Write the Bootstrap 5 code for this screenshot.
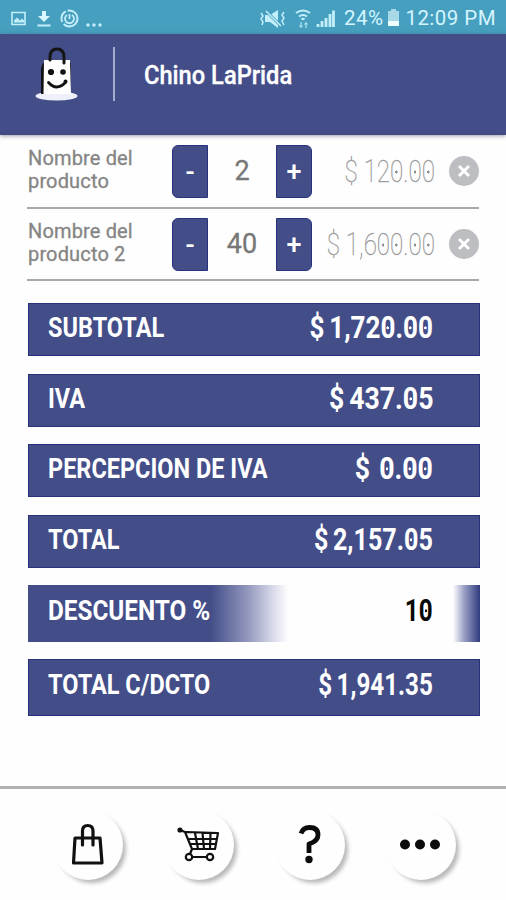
<!DOCTYPE html>
<html lang="es">
<head>
<meta charset="utf-8">
<meta name="viewport" content="width=device-width, initial-scale=1">
<title>Chino LaPrida</title>
<link href="https://cdn.jsdelivr.net/npm/bootstrap@5.3.0/dist/css/bootstrap.min.css" rel="stylesheet">
<style>
:root{--navy:#434e89;--edge:#28327a}
body{font-family:Roboto,"Liberation Sans",sans-serif;background:#fefefe;height:900px;overflow:hidden}
svg{display:block;flex:none}
.statusbar{height:34px;background:#469fbe;color:#d3f5ff;padding:2px 10px 0 11px;font-size:20.5px;white-space:nowrap}
.clock{letter-spacing:.45px}
.topbar{height:101px;background:var(--navy);border-bottom:2px solid #424b84;box-shadow:0 1px 4px rgba(60,60,90,.5);padding:11px 0 0 33px}
.rule-v{width:2px;height:54px;background:#a5abcf;margin:2px 29px 0 33px}
.shop-title{font-size:26px;font-weight:500;color:#fff;line-height:30px;margin-top:15px;transform:scaleX(.91);transform-origin:left;white-space:nowrap;-webkit-text-stroke:.3px #fff}
.content-area{padding:8px 27px 0 28px}
.item-row{height:66px;padding-top:2px;border-bottom:2px solid #a9a9a9;margin-left:-1px;padding-left:1px}
.item-row + .item-row{height:72px;padding-top:9px}
.item-name{width:144px;flex:none;font-size:20px;line-height:23px;color:#858585;letter-spacing:.15px;margin-top:2px;-webkit-text-stroke:.3px #858585}
.step{width:36px;flex:none;height:53px;border:1px solid var(--edge);background:var(--navy);color:#fff;font-size:27px;font-weight:500;line-height:48px;padding:0;text-align:center}
.step-minus{border-radius:6px 0 0 6px}
.step-plus{border-radius:0 6px 6px 0}
.qty{width:68px;flex:none;font-size:27px;line-height:53px;color:#777;text-align:center;-webkit-text-stroke:.3px #777}
.price{flex:1 1 0;width:0;display:flex;justify-content:flex-end;font-weight:100;font-size:31px;color:#8c8c8c;white-space:pre;transform:scaleX(.78);transform-origin:right;line-height:53px;-webkit-text-stroke:.35px #a0a0a0}
.remove{width:30px;height:30px;margin:11px 0 0 14px}
.bars{padding-top:22px}
.total-bar{height:53px;background:var(--navy);border:1px solid var(--edge);padding:0 46px 3px 19px;margin-bottom:17.600px;color:#fff;width:452px}
.total-bar.tall{height:57px;padding-bottom:5px;margin-bottom:16.500px}
.bar-label{font-size:27px;font-weight:700;transform:scaleX(.87);transform-origin:left;white-space:nowrap;line-height:40px}
.label-wide{transform:scaleX(.9)}
.bar-value{font-size:31px;font-weight:700;transform:scaleX(.84);transform-origin:right;white-space:nowrap;line-height:40px;word-spacing:-2px}
.value-wide{transform:scaleX(.86)}
.value-gap{word-spacing:3px;transform:scaleX(.86)}
.value-tight{transform:scaleX(.81)}
.value-ones{transform:scaleX(.78)}
.discount{border:0;padding-left:20px;padding-right:47px;background:linear-gradient(90deg,var(--navy) 0,var(--navy) 183px,#9398bd 220px,#d8daea 245px,#fefefe 260px,#fefefe 425px,#9ba1c5 436px,#2f3b7e 452px)}
.discount .bar-value{color:#080808}
.z{background:radial-gradient(circle at 50% 51%,currentColor 0,currentColor 1.2px,transparent 1.8px)}
.bottom-nav{height:114px;border-top:3px solid #b2b2b2;padding:21px 0 0 53px;gap:41px;background:#fefefe}
.nav-disc{width:70px;height:70px;border-radius:50%;background:#fefefe;box-shadow:4px 4px 4px -1px rgba(0,0,0,.28)}
</style>
<script src="https://cdn.jsdelivr.net/npm/bootstrap@5.3.0/dist/js/bootstrap.bundle.min.js"></script>
</head>
<body class="d-flex flex-column m-0">
<header>
  <div class="statusbar d-flex align-items-center justify-content-between">
    <svg width="92" height="30" viewBox="0 0 92 30" fill="none" stroke="#c3effb">
      <path d="M1 9.500h13v12H1z" stroke-width="1.600"/><path d="M3 19.500v-2l3-3 3 3 2-2 2 2v2z" fill="#c3effb" stroke="none"/>
      <path d="M31 8h4v5h4l-6 6-6-6h4z" fill="#d8f7ff" stroke="none"/><path d="M26.500 22.500h13" stroke-width="2"/>
      <circle cx="58.500" cy="15.500" r="8" stroke-width="2" stroke-dasharray="19 2.500 12 2"/><path d="M56 12a4.500 4.500 0 1 0 5 0M58.500 11v5" stroke-width="1.800"/>
      <g fill="#c3effb" stroke="none"><circle cx="77" cy="22" r="1.700"/><circle cx="83" cy="22" r="1.700"/><circle cx="89" cy="22" r="1.700"/></g>
    </svg>
    <div class="d-flex align-items-center">
      <svg width="77" height="30" viewBox="0 0 77 30" fill="none" stroke="#c3effb">
        <path d="M6 12h5l8-5v18l-8-6H6z" fill="#c3effb" stroke="none"/><path d="M7 8l14 14" stroke="#469fbe" stroke-width="3"/><path d="M7 8l15 15M2 10l2 3-2 3 2 3-1 3M25 9l-2 3 2 3-2 3 2 4" stroke-width="1.500"/>
        <path d="M37 10q7-5 14 0M40 13.500q4-3 8 0M42.500 16.500q1.500-1.500 3 0" stroke-width="2"/><path d="M42 19v5M40.500 22.500l1.500 2 1.500-2M47 25v-5M45.500 21.500l1.500-2 1.500 2" stroke-width="1"/>
        <path d="M59 24v-3M63 24v-6M67 24v-9M71 24V11M74.500 24V7.500" stroke-width="2.800"/>
      </svg>
      <span class="clock ms-1 ps-1">24%</span>
      <svg class="ms-1" width="14" height="30" viewBox="0 0 14 30"><path d="M4 6h5v2h3v15H1V8h3z" fill="#a9d8e6"/><path d="M1 18h11v5H1z" fill="#f0ffff"/></svg>
      <span class="clock ms-1">12:09 PM</span>
    </div>
  </div>
  <div class="topbar d-flex align-items-start">
    <svg width="47" height="60" viewBox="0 0 47 60" fill="none" stroke-linecap="round">
      <ellipse cx="23.500" cy="51" rx="21" ry="4.500" fill="#eef0fa"/>
      <path d="M8 23l2-5h28v31H8z" fill="#111"/><path d="M11 15h26l1 34H10.500z" fill="#fff"/>
      <path d="M17 15v-3q0-8 7-8t7 8v6" stroke="#151515" stroke-width="3"/>
      <circle cx="18" cy="27" r="3.100" fill="#111"/><circle cx="30" cy="27" r="2.800" fill="#111"/>
      <path d="M15.500 37.500q8 9 17 0" stroke="#111" stroke-width="2.800"/><circle cx="32.500" cy="36.500" r="2" fill="#111"/>
    </svg>
    <div class="rule-v"></div>
    <div class="shop-title">Chino LaPrida</div>
  </div>
</header>
<main class="content-area flex-grow-1">
  <section>
    <div class="item-row d-flex align-items-start">
      <div class="item-name">Nombre del<br>producto</div>
      <button class="step step-minus">-</button><div class="qty">2</div><button class="step step-plus">+</button>
      <div class="price">$ 12<span class="z">0</span>.<span class="z">0</span><span class="z">0</span></div>
      <svg class="remove" viewBox="0 0 30 30"><circle cx="15" cy="15" r="15" fill="#bdbec1"/><path d="M10 10l10 10M20 10L10 20" stroke="#fff" stroke-width="3"/></svg>
    </div>
    <div class="item-row d-flex align-items-start">
      <div class="item-name">Nombre del<br>producto 2</div>
      <button class="step step-minus">-</button><div class="qty">40</div><button class="step step-plus">+</button>
      <div class="price">$ 1,6<span class="z">0</span><span class="z">0</span>.<span class="z">0</span><span class="z">0</span></div>
      <svg class="remove" viewBox="0 0 30 30"><circle cx="15" cy="15" r="15" fill="#bdbec1"/><path d="M10 10l10 10M20 10L10 20" stroke="#fff" stroke-width="3"/></svg>
    </div>
  </section>
  <section class="bars">
    <div class="total-bar d-flex align-items-center justify-content-between"><span class="bar-label">SUBTOTAL</span><span class="bar-value">$ 1,72<span class="z">0</span>.<span class="z">0</span><span class="z">0</span></span></div>
    <div class="total-bar d-flex align-items-center justify-content-between"><span class="bar-label">IVA</span><span class="bar-value value-wide">$ 437.<span class="z">0</span>5</span></div>
    <div class="total-bar d-flex align-items-center justify-content-between"><span class="bar-label">PERCEPCION DE IVA</span><span class="bar-value value-gap">$ <span class="z">0</span>.<span class="z">0</span><span class="z">0</span></span></div>
    <div class="total-bar d-flex align-items-center justify-content-between"><span class="bar-label">TOTAL</span><span class="bar-value value-tight">$ 2,157.<span class="z">0</span>5</span></div>
    <div class="total-bar tall discount d-flex align-items-center justify-content-between"><span class="bar-label label-wide">DESCUENTO %</span><span class="bar-value value-ones">1<span class="z">0</span></span></div>
    <div class="total-bar tall d-flex align-items-center justify-content-between"><span class="bar-label">TOTAL C/DCTO</span><span class="bar-value value-ones">$ 1,941.35</span></div>
  </section>
</main>
<nav class="bottom-nav d-flex align-items-start">
  <div class="nav-disc"><svg width="70" height="70" viewBox="0 0 70 70" fill="none" stroke="#111" stroke-width="3.200" stroke-linejoin="round" stroke-linecap="round"><path d="M22 28h25l2 25H20.500zM29.500 35V21q0-5.500 5.200-5.500t5.300 5.500v14"/></svg></div>
  <div class="nav-disc"><svg width="70" height="70" viewBox="0 0 70 70" fill="none" stroke="#111" stroke-width="2.200" stroke-linejoin="round" stroke-linecap="round"><circle cx="16" cy="20" r="1.500" fill="#111"/><path d="M16 20l5 2 7 17h23l3-16-32-1M24 29h29M26 34h26M31 23l3 16M38.500 23l1.500 16M46.500 23L46 39M28 39l-2 5M29 47h14"/><circle cx="25" cy="47" r="3.200"/><circle cx="46" cy="47" r="3.200"/></svg></div>
  <div class="nav-disc"><svg width="70" height="70" viewBox="0 0 70 70" fill="none" stroke="#0b0b0b" stroke-width="4.800" stroke-linejoin="round" stroke-linecap="butt"><path d="M26 23.500q2-6 8.500-6 8.500 0 8.500 7.500 0 6-9 9v9"/><circle cx="34" cy="49.500" r="3.700" fill="#0b0b0b" stroke="none"/></svg></div>
  <div class="nav-disc"><svg width="70" height="70" viewBox="0 0 70 70" fill="#0b0b0b"><circle cx="19" cy="34.500" r="5"/><circle cx="34" cy="34.500" r="5"/><circle cx="49" cy="34.500" r="5"/></svg></div>
</nav>
</body>
</html>
